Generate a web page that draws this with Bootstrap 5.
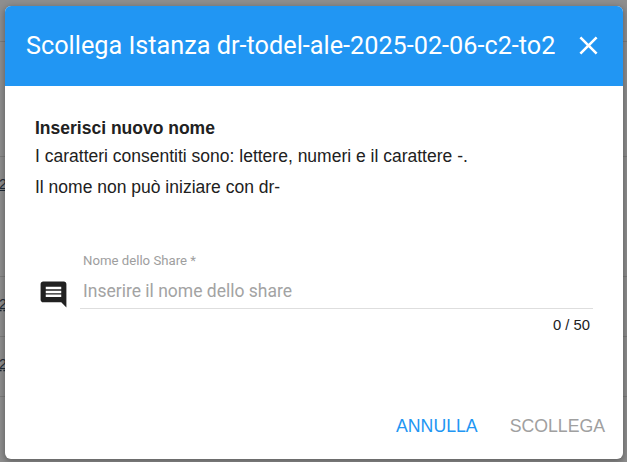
<!DOCTYPE html>
<html lang="it">
<head>
<meta charset="utf-8">
<link href="https://cdn.jsdelivr.net/npm/bootstrap@5.3.0/dist/css/bootstrap.min.css" rel="stylesheet">
<style>
html,body{height:462px;overflow:hidden;background:#8e8e8e}
.backdrop-lines{position:absolute;inset:0;z-index:0}
.bline{position:absolute;left:0;right:0;height:1px;background:#7c7c7c}
.t1{top:41px}.t2{top:156px}.t3{top:276px}.t4{top:336px}.t5{top:396px}
.bfrag{position:absolute;left:-1px;font:14px/16px "Liberation Sans",sans-serif;color:#1f2a36;text-decoration:underline}
.f1{top:176px}.f2{top:296px;text-decoration-style:dashed}.f3{top:356px;text-decoration-style:dashed}
.stage{position:relative;z-index:1;height:462px;padding:6px 4px 3px 5px}
.dlg{height:100%;border-radius:6px;overflow:hidden;background:#fff;box-shadow:0 2px 6px 1px rgba(0,0,0,.3)}
.dlg-head{height:80px;background:#2196f3;padding:0 19px 1px 21px}
.dlg-title{font:400 25.25px/1 Roboto,sans-serif;color:#fff;margin:0;white-space:nowrap}
.dlg-body{padding:31px 30px 0 30px;font:17.5px/24px "Liberation Sans",sans-serif;color:#212121}
.dlg-body p{margin:0}
.l1{line-height:22px}
.l2{line-height:24px;margin-top:5px!important}
.l3{margin-top:7px!important;line-height:24px}
.field-row{margin-top:53px}
.ico-col{width:45px;padding-top:27px}
.ico-chat{display:block;margin-left:2.5px}
.flabel{font:13.2px/17px Roboto,sans-serif;color:#9e9e9e;padding-left:3px}
.finput{font:17.5px/24px Roboto,sans-serif;color:#a3a3a3;padding:10px 0 5px 3px;border-bottom:1px solid #dedede}
.fcount{font:14.8px/16px "Liberation Sans",sans-serif;color:#212121;text-align:right;padding:8px 3px 0 0}
.dlg-foot{padding:0 18px 21px 0;font:17.7px/24px "Liberation Sans",sans-serif;gap:32px}
.act-a{color:#2196f3}
.act-b{color:#a0a0a0}
</style>
</head>
<body>
<div class="backdrop-lines">
  <div class="bline t1"></div>
  <div class="bline t2"></div>
  <div class="bline t3"></div>
  <div class="bline t4"></div>
  <div class="bline t5"></div>
  <span class="bfrag f1">2</span>
  <span class="bfrag f2">2</span>
  <span class="bfrag f3">2</span>
</div>
<div class="stage">
  <div class="dlg d-flex flex-column">
    <div class="dlg-head d-flex align-items-center justify-content-between">
      <h5 class="dlg-title">Scollega Istanza dr-todel-ale-2025-02-06-c2-to2</h5>
      <svg width="31" height="31" viewBox="0 0 24 24" fill="#fff" aria-label="Chiudi"><path d="M19 6.41 17.59 5 12 10.59 6.41 5 5 6.41 10.59 12 5 17.59 6.41 19 12 13.41 17.59 19 19 17.59 13.41 12z"/></svg>
    </div>
    <div class="dlg-body flex-grow-1">
      <p class="l1 fw-bold">Inserisci nuovo nome</p>
      <p class="l2">I caratteri consentiti sono: lettere, numeri e il carattere -.</p>
      <p class="l3">Il nome non può iniziare con dr-</p>
      <div class="field-row d-flex">
        <div class="ico-col flex-shrink-0">
          <svg class="ico-chat" width="31" height="31" viewBox="0 0 24 24" fill="#212121"><path d="M21.99 4c0-1.1-.89-2-1.99-2H4c-1.1 0-2 .9-2 2v12c0 1.1.9 2 2 2h14l4 4-.01-18zM18 14H6v-2h12v2zm0-3H6V9h12v2zm0-3H6V6h12v2z"/></svg>
        </div>
        <div class="flex-grow-1">
          <div class="flabel">Nome dello Share *</div>
          <div class="finput">Inserire il nome dello share</div>
          <div class="fcount">0 / 50</div>
        </div>
      </div>
    </div>
    <div class="dlg-foot d-flex justify-content-end">
      <span class="act-a">ANNULLA</span>
      <span class="act-b">SCOLLEGA</span>
    </div>
  </div>
</div>
<script src="https://cdn.jsdelivr.net/npm/bootstrap@5.3.0/dist/js/bootstrap.bundle.min.js"></script>
</body>
</html>
